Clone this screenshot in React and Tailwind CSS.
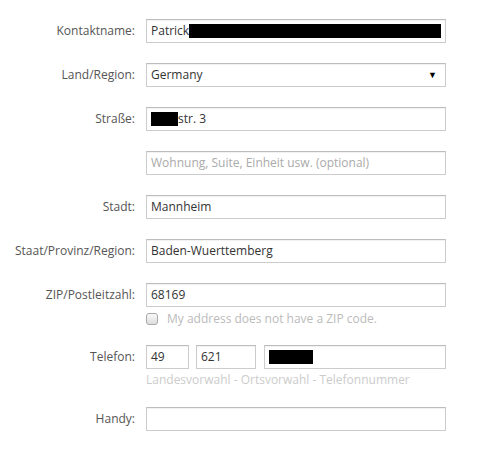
import React from "react";

function Row({ label, children, className = "" }) {
    return (
        <div className={"flex items-start " + className}>
            <div className="w-[136px] shrink-0 h-[24px] flex items-center justify-end pr-px text-[#555]">
                {label}
            </div>
            <div className="ml-[10px] w-[300px]">{children}</div>
        </div>
    );
}

function Box({ children, className = "w-full" }) {
    return (
        <div className={"h-[24px] border border-[#ccc] border-t-[#bdbdbd] bg-white shadow-[inset_0_1px_1px_rgba(0,0,0,0.06)] flex items-center pl-[4px] text-[#333] " + className}>
            {children}
        </div>
    );
}

function Redacted({ w }) {
    return <span className="inline-block bg-black h-[14px]" style={{ width: w }} />;
}

export default function App() {
    return (
        <div className="w-[490px] h-[466px] bg-white pt-[19px] text-[12px] font-['Open_Sans',sans-serif]">
            <Row label="Kontaktname:" className="mb-[20px]">
                <Box>
                    Patrick
                    <Redacted w={252} />
                </Box>
            </Row>

            <Row label="Land/Region:" className="mb-[20px]">
                <Box className="w-full justify-between pr-[8px]">
                    <span>Germany</span>
                    <span className="text-[9px] text-black">▼</span>
                </Box>
            </Row>

            <Row label="Straße:" className="mb-[20px]">
                <Box>
                    <Redacted w={27} />
                    str. 3
                </Box>
            </Row>

            <Row label="" className="mb-[20px]">
                <Box>
                    <span className="text-[#aaa]">Wohnung, Suite, Einheit usw. (optional)</span>
                </Box>
            </Row>

            <Row label="Stadt:" className="mb-[20px]">
                <Box>Mannheim</Box>
            </Row>

            <Row label="Staat/Provinz/Region:" className="mb-[20px]">
                <Box>Baden-Wuerttemberg</Box>
            </Row>

            <Row label="ZIP/Postleitzahl:" className="mb-[18px]">
                <Box>68169</Box>
                <div className="flex items-center mt-[4px] h-[16px]">
                    <span className="w-[12px] h-[12px] rounded-[3px] border border-[#aaa] bg-gradient-to-b from-[#fafafa] to-[#dcdcdc]" />
                    <span className="ml-[9px] text-[#bbb]">My address does not have a ZIP code.</span>
                </div>
            </Row>

            <Row label="Telefon:" className="mb-[18px]">
                <div className="flex">
                    <Box className="w-[43px]">49</Box>
                    <Box className="w-[60px] ml-[7px]">621</Box>
                    <Box className="flex-1 ml-[8px]">
                        <Redacted w={44} />
                    </Box>
                </div>
                <div className="mt-[2px] h-[18px] text-[#ccc] leading-[18px]">
                    Landesvorwahl - Ortsvorwahl - Telefonnummer
                </div>
            </Row>

            <Row label="Handy:">
                <Box />
            </Row>
        </div>
    );
}
